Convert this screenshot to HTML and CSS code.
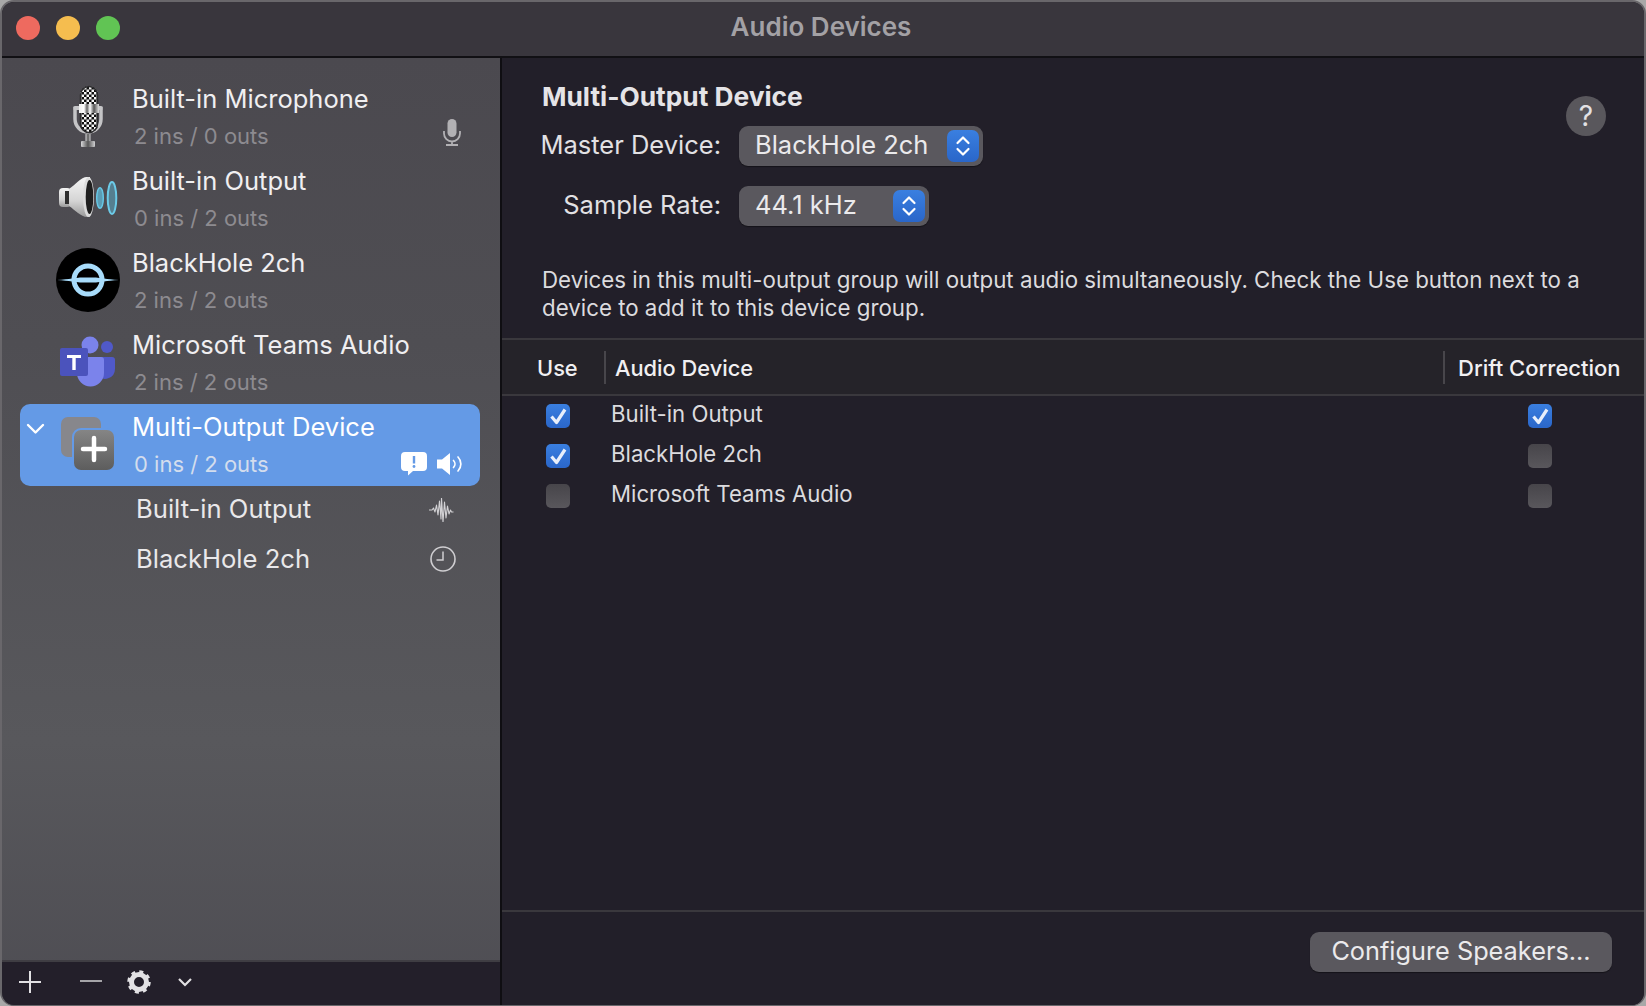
FILE: index.html
```html
<!DOCTYPE html>
<html lang="en">
<head>
<meta charset="utf-8">
<title>Audio Devices</title>
<link rel="stylesheet" href="styles.css">
</head>
<body>
<div class="window">
  <header class="titlebar">
    <div class="lights"><span class="light red"></span><span class="light amber"></span><span class="light green"></span></div>
    <h1 class="title">Audio Devices</h1>
    <div></div>
  </header>
  <div class="content">
    <aside class="sidebar">
      <div class="device-list">
        <div class="device">
          <span class="chev-slot"></span>
          <svg class="device-icon" viewBox="0 0 68 68">
            <defs>
              <pattern id="chk" width="5" height="5" patternUnits="userSpaceOnUse"><rect width="5" height="5" fill="#0e0e0e"/><rect width="2.500" height="2.500" fill="#f4f4f4"/><rect x="2.500" y="2.500" width="2.500" height="2.500" fill="#f4f4f4"/></pattern>
              <linearGradient id="chrome" x1="0" x2="1" y1="0" y2="0"><stop offset="0" stop-color="#eee"/><stop offset=".25" stop-color="#fff"/><stop offset=".4" stop-color="#666"/><stop offset=".55" stop-color="#fff"/><stop offset=".75" stop-color="#555"/><stop offset="1" stop-color="#ddd"/></linearGradient>
              <linearGradient id="hold" x1="0" x2="1" y1="0" y2="0"><stop offset="0" stop-color="#d8d8da"/><stop offset=".5" stop-color="#555"/><stop offset="1" stop-color="#d0d0d2"/></linearGradient>
            </defs>
            <path d="M21 27v10a13 13 0 0 0 26 0V27" fill="none" stroke="#c4c4c6" stroke-width="3.500"/>
            <rect x="26" y="4" width="18" height="47" rx="9" fill="url(#chk)"/>
            <rect x="26.500" y="4.500" width="17" height="46" rx="8.500" fill="none" stroke="#2c2c2e" stroke-width="1.500"/>
            <rect x="19" y="24" width="30" height="4" rx="2" fill="#c6c6c8"/>
            <rect x="25" y="22" width="20" height="9" fill="url(#chrome)"/>
            <rect x="31.500" y="52" width="5" height="8" fill="url(#hold)"/>
            <rect x="27" y="59" width="14" height="6" rx="1" fill="url(#hold)"/>
          </svg>
          <div class="device-text">
            <div class="device-name">Built-in Microphone</div>
            <div class="device-io">2 ins / 0 outs</div>
          </div>
          <svg class="status-icon mic" viewBox="0 0 18 27"><rect x="4.500" y="0" width="9" height="18" rx="4.500" fill="#b2b1b4"/><path d="M1 12v2.500a8 8 0 0 0 16 0V12M9 22.500V26M3 26h12" fill="none" stroke="#b2b1b4" stroke-width="1.800"/></svg>
        </div>
        <div class="device">
          <span class="chev-slot"></span>
          <svg class="device-icon" viewBox="0 0 68 68">
            <defs>
              <linearGradient id="cone" x1="0" x2="0" y1="0" y2="1"><stop offset="0" stop-color="#f4f4f4"/><stop offset=".6" stop-color="#d4d4d4"/><stop offset="1" stop-color="#9a9a9a"/></linearGradient>
            </defs>
            <rect x="5" y="24" width="12" height="19" rx="4" fill="url(#cone)"/>
            <rect x="11" y="27" width="4" height="13" fill="#2f2f2f"/>
            <path d="M15 25C21 21 27 13 33 13h3v40h-3C27 53 21 46 15 42z" fill="url(#cone)"/>
            <ellipse cx="34.500" cy="33" rx="5.500" ry="20" fill="#dcdcdc"/>
            <ellipse cx="35.500" cy="33" rx="3.800" ry="17" fill="#1f1f1f"/>
            <ellipse cx="46" cy="34" rx="3.300" ry="10.300" fill="#5b9db5" stroke="#66c6e4" stroke-width="1.500"/>
            <ellipse cx="58" cy="34" rx="4.300" ry="16" fill="#557f90" stroke="#6ccbe8" stroke-width="2"/>
          </svg>
          <div class="device-text">
            <div class="device-name">Built-in Output</div>
            <div class="device-io">0 ins / 2 outs</div>
          </div>
        </div>
        <div class="device">
          <span class="chev-slot"></span>
          <svg class="device-icon" viewBox="0 0 68 68">
            <circle cx="34" cy="34" r="32" fill="#000"/>
            <circle cx="34" cy="34" r="14" fill="none" stroke="#a8dcfb" stroke-width="5"/>
            <path d="M3 34C16 33 22 32 26 31.500h16C46 32 52 33 65 34 52 35 46 36 42 36.500H26C22 36 16 35 3 34z" fill="#a8dcfb"/>
          </svg>
          <div class="device-text">
            <div class="device-name">BlackHole 2ch</div>
            <div class="device-io">2 ins / 2 outs</div>
          </div>
        </div>
        <div class="device">
          <span class="chev-slot"></span>
          <svg class="device-icon" viewBox="0 0 68 68">
            <circle cx="53" cy="19" r="6" fill="#5059c9"/>
            <path d="M44 29h14a3 3 0 0 1 3 3v9a10 10 0 0 1-17 7z" fill="#5059c9"/>
            <circle cx="36" cy="17" r="8.500" fill="#7b83eb"/>
            <path d="M23 29h24a3 3 0 0 1 3 3v13a13.500 13.500 0 0 1-27 0z" fill="#7b83eb"/>
            <rect x="6" y="20" width="28" height="28" rx="2" fill="#4b53bc"/>
            <path d="M13 27h14v3h-5.300v12h-3.400V30H13z" fill="#fff"/>
          </svg>
          <div class="device-text">
            <div class="device-name">Microsoft Teams Audio</div>
            <div class="device-io">2 ins / 2 outs</div>
          </div>
        </div>
        <div class="device selected">
          <svg class="chev-slot chev" viewBox="0 0 34 24"><path d="M8 8l7.500 7.500L23 8" fill="none" stroke="#fff" stroke-width="2.400" stroke-linecap="round" stroke-linejoin="round"/></svg>
          <svg class="device-icon" viewBox="0 0 68 68">
            <defs><linearGradient id="mo" x1="0" x2="0" y1="0" y2="1"><stop offset="0" stop-color="#858585"/><stop offset="1" stop-color="#5d5d5d"/></linearGradient></defs>
            <rect x="7" y="7" width="40" height="40" rx="7" fill="#87878c"/>
            <rect x="18" y="18" width="44" height="44" rx="9" fill="#649ae6"/>
            <rect x="20" y="20" width="40" height="40" rx="7" fill="url(#mo)"/>
            <path d="M40 28v22M29 39h22" stroke="#fff" stroke-width="4.500" stroke-linecap="round"/>
          </svg>
          <div class="device-text">
            <div class="device-name">Multi-Output Device</div>
            <div class="device-io">0 ins / 2 outs</div>
          </div>
          <div class="status-group">
            <svg class="status-icon bubble" viewBox="0 0 26 24"><path d="M4 0h18a4 4 0 0 1 4 4v11a4 4 0 0 1-4 4H12l-5 4.500V19H4a4 4 0 0 1-4-4V4a4 4 0 0 1 4-4z" fill="#fff"/><path d="M13 4v7.500" stroke="#649ae6" stroke-width="2.400"/><circle cx="13" cy="14.500" r="1.400" fill="#649ae6"/></svg>
            <svg class="status-icon speaker" viewBox="0 0 26 22"><path d="M0 6.500h5L13 0v22l-8-6.500H0z" fill="#fff"/><path d="M16.500 7.500a5 5 0 0 1 0 7M21 4a10 10 0 0 1 0 14" fill="none" stroke="#fff" stroke-width="1.700" stroke-linecap="round"/></svg>
          </div>
        </div>
        <div class="sub-devices">
          <div class="sub-device">
            <span class="sub-name">Built-in Output</span>
            <svg class="status-icon wave" viewBox="0 0 25 24"><path d="M0 12h3l1.500-2 1.500 4 1.500-7 1.500 10 1.500-14 1.500 18L12.500 0l1.500 24 1.500-20 1.500 16 1.500-12 1.500 8 1.500-4 1 2h2" fill="none" stroke="#d2d1d4" stroke-width="1.100" stroke-linejoin="round"/></svg>
          </div>
          <div class="sub-device">
            <span class="sub-name">BlackHole 2ch</span>
            <svg class="status-icon clock" viewBox="0 0 26 26"><circle cx="13" cy="13" r="12" fill="none" stroke="#cfced1" stroke-width="1.600"/><path d="M13 5.500V14H6.500" fill="none" stroke="#cfced1" stroke-width="1.500"/></svg>
          </div>
        </div>
      </div>
      <div class="toolbar">
        <svg class="tool plus" viewBox="0 0 22 22"><path d="M11 0v22M0 11h22" stroke="#e2e1e4" stroke-width="2"/></svg>
        <svg class="tool minus" viewBox="0 0 22 22"><path d="M0 11h22" stroke="#a5a4a8" stroke-width="2"/></svg>
        <svg class="tool gear" viewBox="0 0 24 24"><circle cx="12" cy="12" r="7.500" fill="none" stroke="#e2e1e4" stroke-width="5"/><circle cx="12" cy="12" r="10" fill="none" stroke="#e2e1e4" stroke-width="3.500" stroke-dasharray="3.850 4"/></svg>
        <svg class="tool caret" viewBox="0 0 16 10"><path d="M2 2l6 6 6-6" fill="none" stroke="#e2e1e4" stroke-width="2.200"/></svg>
      </div>
    </aside>
    <main class="panel">
      <section class="top">
        <div class="top-left">
          <h2 class="heading">Multi-Output Device</h2>
          <div class="form">
            <label class="form-label">Master Device:</label>
            <div class="select master"><span class="select-text">BlackHole 2ch</span><span class="stepper"><svg viewBox="0 0 32 32"><path d="M10.500 13l5.500-5.500 5.500 5.500M10.500 19l5.500 5.500 5.500-5.500" fill="none" stroke="#fff" stroke-width="2.200" stroke-linecap="round" stroke-linejoin="round"/></svg></span></div>
            <label class="form-label">Sample Rate:</label>
            <div class="select rate"><span class="select-text">44.1 kHz</span><span class="stepper"><svg viewBox="0 0 32 32"><path d="M10.500 13l5.500-5.500 5.500 5.500M10.500 19l5.500 5.500 5.500-5.500" fill="none" stroke="#fff" stroke-width="2.200" stroke-linecap="round" stroke-linejoin="round"/></svg></span></div>
          </div>
        </div>
        <div class="help">?</div>
      </section>
      <p class="desc">Devices in this multi-output group will output audio simultaneously. Check the Use button next to a<br>device to add it to this device group.</p>
      <div class="table">
        <div class="thead">
          <div class="th th-use">Use</div>
          <div class="th th-device">Audio Device</div>
          <div class="th th-drift">Drift Correction</div>
        </div>
        <div class="tr">
          <span class="check on use"><svg viewBox="0 0 24 24"><path d="M5.500 12.500l5 6L19 5.500" fill="none" stroke="#e8effb" stroke-width="3.200" stroke-linejoin="round"/></svg></span>
          <span class="td-name">Built-in Output</span>
          <span class="check on drift"><svg viewBox="0 0 24 24"><path d="M5.500 12.500l5 6L19 5.500" fill="none" stroke="#e8effb" stroke-width="3.200" stroke-linejoin="round"/></svg></span>
        </div>
        <div class="tr">
          <span class="check on use"><svg viewBox="0 0 24 24"><path d="M5.500 12.500l5 6L19 5.500" fill="none" stroke="#e8effb" stroke-width="3.200" stroke-linejoin="round"/></svg></span>
          <span class="td-name">BlackHole 2ch</span>
          <span class="check drift"></span>
        </div>
        <div class="tr">
          <span class="check use"></span>
          <span class="td-name">Microsoft Teams Audio</span>
          <span class="check drift"></span>
        </div>
      </div>
      <footer class="footer"><button class="btn"><span class="btn-text">Configure Speakers...</span></button></footer>
    </main>
  </div>
</div>
</body>
</html>
```

FILE: styles.css
```css
* { box-sizing: border-box; }
html, body { margin: 0; height: 100%; }
body { background: #a8a8a8; font-family: Inter, "Liberation Sans", sans-serif; overflow: hidden; }
.window { height: 1006px; width: 1646px; display: flex; flex-direction: column; border-radius: 14px; overflow: hidden; border: 2px solid #69676b; border-bottom-width: 1px; background: #221f29; }
.titlebar { height: 56px; flex: none; display: grid; grid-template-columns: 1fr auto 1fr; align-items: center; padding: 0 14px 2px; background: #39363d; border-bottom: 2px solid #111014; }
.lights { display: flex; gap: 16px; }
.light { width: 24px; height: 24px; border-radius: 50%; }
.red { background: #ee6a5f; } .amber { background: #f5bd4f; } .green { background: #61c454; }
.title { margin: -4px 4px 0 0; font-size: 26px; font-weight: 600; color: #a3a1a5; }
.content { flex: 1; min-height: 0; display: flex; }
.sidebar { width: 500px; flex: none; display: flex; flex-direction: column; background: linear-gradient(180deg, #4b494f 0%, #4f4e53 30%, #58585c 72%, #4e4d53 100%); border-right: 2px solid #0f0e12; }
.device-list { flex: 1; padding: 18px 20px 0 18px; }
.device { height: 82px; display: flex; position: relative; border-radius: 10px; padding-right: 17px; }
.selected { background: #649ae6; }
.chev-slot { width: 34px; flex: none; }
.chev { height: 24px; margin-top: 13px; }
.device-icon { width: 68px; height: 68px; flex: none; margin-top: 6px; }
.device-text { margin-left: 10px; padding-top: 5px; flex: 1; }
.device-name { font-size: 25.500px; line-height: 36px; color: #f0eff1; white-space: nowrap; }
.device-io { font-size: 22px; line-height: 38px; color: #8d8b90; margin-left: 2px; white-space: nowrap; }
.selected .device-name { color: #fff; }
.selected .device-io { color: #d3dded; }
.status-icon { display: block; flex: none; }
.mic { width: 18px; height: 27px; align-self: flex-end; margin: 0 2px 12px 0; }
.status-group { display: flex; gap: 10px; align-items: center; align-self: flex-end; margin-bottom: 10px; }
.bubble { width: 26px; height: 24px; }
.speaker { width: 26px; height: 22px; }
.sub-devices { display: flex; flex-direction: column; gap: 4px; }
.sub-device { height: 46px; display: flex; align-items: center; justify-content: space-between; padding: 0 26px 0 116px; }
.sub-name { font-size: 25.600px; color: #e9e8ea; padding-bottom: 2px; }
.wave { width: 25px; height: 24px; margin-top: 2px; }
.clock { width: 26px; height: 26px; margin-right: -2px; }
.toolbar { height: 45px; flex: none; display: flex; align-items: center; background: #231f2a; border-top: 2px solid #3f3d43; padding: 0 0 3px 17px; }
.tool { display: block; flex: none; }
.plus { width: 22px; height: 22px; }
.minus { width: 22px; height: 22px; margin-left: 39px; margin-top: -2px; }
.gear { width: 24px; height: 24px; margin-left: 25px; }
.caret { width: 16px; height: 10px; margin-left: 26px; }
.panel { flex: 1; min-width: 0; display: flex; flex-direction: column; background: #221f29; }
.top { display: flex; justify-content: space-between; padding: 23px 38px 0 41px; }
.heading { margin: 0 0 13px -1px; font-size: 26.300px; line-height: 32px; font-weight: 650; color: #e5e4e7; }
.form { display: grid; grid-template-columns: 180px auto; column-gap: 18px; row-gap: 20px; align-items: center; justify-items: start; margin-left: -2px; }
.form-label { justify-self: end; font-size: 25.500px; color: #e2e1e4; padding-bottom: 4px; white-space: nowrap; }
.select { height: 40px; display: flex; align-items: center; justify-content: space-between; padding: 0 4px 0 16px; background: #5a585e; border-radius: 9px; font-size: 25.500px; color: #ebeaec; box-shadow: 0 1px 1px rgba(0,0,0,.4); }
.select-text { padding-bottom: 4px; }
.master { width: 244px; }
.rate { width: 190px; }
.stepper { width: 32px; height: 32px; border-radius: 7px; background: linear-gradient(180deg, #3a7fe0, #2a66c9); display: block; }
.stepper svg { display: block; width: 32px; height: 32px; }
.help { width: 40px; height: 40px; margin-top: 15px; border-radius: 50%; background: #59575c; color: #e2e1e4; font-size: 28px; line-height: 41px; text-align: center; }
.desc { margin: 40px 0 0; padding: 0 40px; font-size: 22.300px; line-height: 28px; color: #dcdbde; white-space: nowrap; }
.table { flex: 1; margin-top: 16px; }
.thead { height: 58px; display: grid; grid-template-columns: 102px 1fr 201px; align-items: center; background: #252329; border-top: 2px solid #3a383d; border-bottom: 2px solid #3a383d; }
.th { font-size: 21.800px; font-weight: 500; color: #f1f0f2; line-height: 32px; }
.th-use { padding: 1px 0 0 35px; }
.th-device { border-left: 2px solid #48464b; padding: 1px 0 0 9px; }
.th-drift { border-left: 2px solid #48464b; padding: 1px 0 0 13px; white-space: nowrap; font-size: 22px; }
.tr { height: 40px; display: grid; grid-template-columns: 102px 1fr 201px; align-items: center; }
.check { width: 24px; height: 24px; border-radius: 5px; display: block; background: linear-gradient(180deg, #47454a, #59575c); }
.check.on { background: linear-gradient(180deg, #3a7fe0, #2a66c9); }
.check svg { display: block; width: 24px; height: 24px; }
.use { margin-left: 44px; }
.drift { margin-left: 85px; }
.td-name { font-size: 22.200px; color: #dcdbde; padding: 0 0 5px 7px; white-space: nowrap; }
.footer { height: 95px; flex: none; display: flex; justify-content: flex-end; padding: 20px 32px 0 0; border-top: 2px solid #3a383d; }
.btn { width: 302px; height: 40px; border: 0; border-radius: 9px; background: #5a585e; color: #ebeaec; font: 25.300px Inter, "Liberation Sans", sans-serif; padding: 0; box-shadow: 0 1px 1px rgba(0,0,0,.4); }
.btn-text { display: block; padding-bottom: 3px; }
```
